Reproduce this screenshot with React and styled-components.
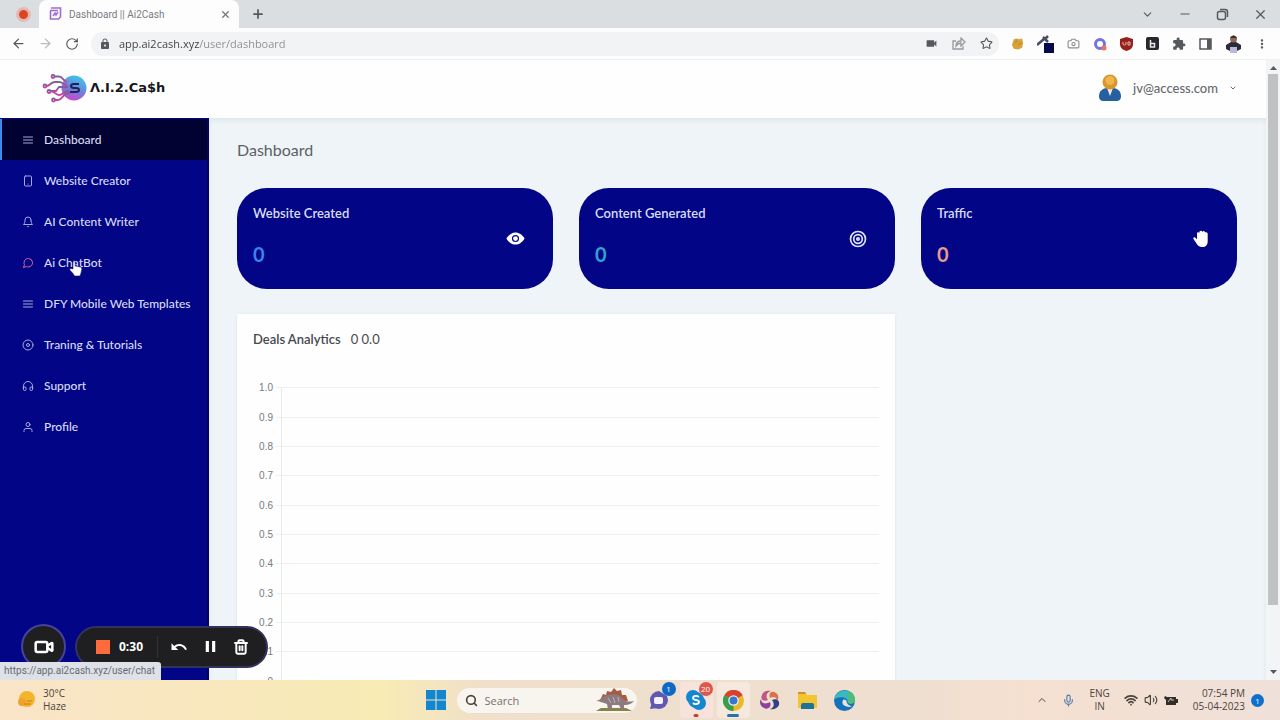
import styled, { createGlobalStyle } from "styled-components";
import {
  FiMenu,
  FiSmartphone,
  FiBell,
  FiMessageCircle,
  FiDisc,
  FiHeadphones,
  FiUser,
} from "react-icons/fi";
import {
  LuArrowLeft,
  LuArrowRight,
  LuRotateCw,
  LuChevronDown,
  LuChevronUp,
  LuMinus,
  LuX,
  LuPlus,
  LuStar,
  LuCamera,
  LuSearch,
  LuVideo,
  LuWifi,
  LuVolume2,
  LuMic,
  LuTrash2,
} from "react-icons/lu";
import {
  MdLock,
  MdVideocam,
  MdExtension,
  MdMoreVert,
  MdPause,
  MdUndo,
} from "react-icons/md";
import { IoEye } from "react-icons/io5";

const GlobalStyle = createGlobalStyle`
  * {
    box-sizing: border-box;
  }
  body {
    margin: 0;
    font-family: Lato, "Noto Sans", sans-serif;
  }
  button {
    display: inline-flex;
    align-items: center;
    justify-content: center;
    padding: 0;
    border: none;
    background: none;
    color: inherit;
    font: inherit;
  }
  svg {
    display: block;
    flex-shrink: 0;
  }
`;

const Screen = styled.div`
  position: relative;
  display: flex;
  flex-direction: column;
  height: 100vh;
  overflow: hidden;
  background-color: #fdfdfe;
`;

/* browser */
const TabStrip = styled.div`
  display: flex;
  align-items: center;
  justify-content: space-between;
  height: 28px;
  flex-shrink: 0;
  padding: 0 12px 0 16px;
  background-color: #dadee1;
  color: #55585c;
`;
const Tabs = styled.div`
  display: flex;
  align-items: center;
  align-self: stretch;
  gap: 12px;
`;
const RecordDot = styled.div`
  width: 15px;
  height: 15px;
  border: 3px solid #e3b9b5;
  border-radius: 50%;
  background-color: #dc4524;
`;
const Tab = styled.div`
  display: flex;
  align-items: center;
  align-self: stretch;
  gap: 7px;
  width: 200px;
  margin-left: -4px;
  padding: 0 8px 0 10px;
  border-radius: 8px 8px 0 0;
  background-color: #fdfdfe;
  font-family: Roboto, sans-serif;
  font-size: 10px;
  color: #797b7e;
`;
const TabTitle = styled.span`
  flex: 1;
`;
const WindowButtons = styled.div`
  display: flex;
  align-items: center;
  gap: 24px;
`;
const Toolbar = styled.div`
  display: flex;
  align-items: center;
  height: 32px;
  flex-shrink: 0;
  gap: 12px;
  padding: 0 11px;
  border-bottom: 1px solid #f0f1f2;
  color: #55585c;
`;
const AddressBar = styled.div`
  display: flex;
  align-items: center;
  flex: 1;
  gap: 8px;
  height: 24px;
  padding: 0 6px 0 8px;
  border-radius: 12px;
  background-color: #f1f3f4;
`;
const AddressInput = styled.input`
  flex: 1;
  min-width: 0;
  padding: 0;
  border: none;
  outline: none;
  font-family: "Open Sans", sans-serif;
  font-size: 11px;
  color: transparent;
  background: linear-gradient(90deg, #3b3e42 80px, #8a8d90 80px);
  background-clip: text;
  -webkit-background-clip: text;
`;
const AddressIcons = styled.div`
  display: flex;
  gap: 14px;
`;
const Extensions = styled.div`
  display: flex;
  align-items: center;
  gap: 13px;
`;
const Faded = styled.button`
  opacity: 0.4;
`;

/* page */
const Page = styled.div`
  display: flex;
  flex: 1;
  min-height: 0;
`;
const Site = styled.div`
  display: flex;
  flex-direction: column;
  flex: 1;
  min-width: 0;
`;
const Header = styled.header`
  display: flex;
  align-items: center;
  justify-content: space-between;
  height: 58px;
  flex-shrink: 0;
  padding: 0 29px 3px 42px;
  background-color: #fefefe;
`;
const Logo = styled.div`
  display: flex;
  align-items: center;
  gap: 3px;
  font-family: "DejaVu Sans", sans-serif;
  font-size: 13px;
  font-weight: 700;
  color: #17171b;
`;
const Account = styled.button`
  gap: 11px;
  font-size: 13px;
  font-weight: 500;
  color: #666a70;
`;
const Body = styled.div`
  display: flex;
  flex: 1;
  min-height: 0;
`;
const Sidebar = styled.nav`
  width: 209px;
  flex-shrink: 0;
  padding-top: 1px;
  background-color: #010586;
  border-right: 2px solid #04045c;
`;
const NavItem = styled.a`
  display: flex;
  align-items: center;
  gap: 10px;
  height: 41px;
  padding-left: ${({ $active }) => ($active ? "20px" : "22px")};
  border-left: ${({ $active }) => ($active ? "2px solid #3b8cf0" : "none")};
  background-color: ${({ $active }) => ($active ? "#020232" : "transparent")};
  font-size: 12px;
  font-weight: 500;
  color: #d9dcf5;
  text-decoration: none;
  white-space: nowrap;

  svg {
    color: ${({ $tint }) => $tint || "#a6a9dc"};
  }
`;
const Main = styled.main`
  flex: 1;
  min-width: 0;
  overflow: hidden;
  padding: 20px 29px 0 28px;
  background-color: #eef4f7;
  box-shadow: inset 0 3px 4px #dfe7ee;
`;
const Title = styled.h1`
  margin: 0 0 26px;
  font-size: 16px;
  line-height: 24px;
  font-weight: 400;
  color: #5a5f66;
`;
const Cards = styled.div`
  display: grid;
  grid-template-columns: repeat(3, 1fr);
  gap: 25px 26px;
`;
const Card = styled.section`
  display: flex;
  align-items: center;
  justify-content: space-between;
  height: 101px;
  padding: 0 28px 0 16px;
  border-radius: 30px;
  background-color: #010586;
  color: white;
`;
const CardText = styled.div`
  padding-bottom: 6px;
`;
const CardLabel = styled.div`
  font-size: 13px;
  line-height: 20px;
  font-weight: 600;
  color: #d9dcf5;
`;
const CardValue = styled.div`
  margin-top: 16px;
  font-size: 20px;
  line-height: 30px;
  font-weight: 700;
  color: ${({ $color }) => $color};
`;
const Analytics = styled.section`
  grid-column: span 2;
  padding: 15px 16px;
  background-color: #fefefe;
  box-shadow: 0 0 3px #dde5ea;
`;
const AnalyticsTitle = styled.h2`
  display: flex;
  gap: 10px;
  margin: 0 0 24px;
  font-size: 13px;
  line-height: 20px;
  font-weight: 600;
  color: #45494f;
`;
const Totals = styled.span`
  font-weight: 400;
`;
const Chart = styled.div`
  display: grid;
  grid-template-rows: repeat(11, 1fr);
  height: 323px;
`;
const ChartRow = styled.div`
  display: flex;
  align-items: center;
  gap: 3px;
  font-family: "Liberation Sans", sans-serif;
  font-size: 10px;
  color: #777a7e;
`;
const Tick = styled.span`
  width: 20px;
  text-align: right;
`;
const GridLine = styled.div`
  flex: 1;
  height: 1px;
  background-color: #eeeff0;
`;
const AxisCell = styled.div`
  display: flex;
  align-self: stretch;
  flex: 1;
  margin-top: ${({ $first }) => ($first ? "14px" : "0")};
  align-items: ${({ $first }) => ($first ? "flex-start" : "center")};
  background: linear-gradient(#e9eaeb, #e9eaeb) 5px 0 / 1px 100% no-repeat;
`;

const Scrollbar = styled.div`
  display: flex;
  flex-direction: column;
  align-items: center;
  justify-content: space-between;
  width: 14px;
  padding: 5px 0;
  background-color: #f3f4f5;
  color: #55585c;
`;
const Thumb = styled.div`
  width: 10px;
  height: 87%;
  margin: 4px 0 auto;
  background-color: #bfc1c3;
`;

/* taskbar */
const Taskbar = styled.footer`
  display: grid;
  grid-template-columns: 1fr auto 1fr;
  align-items: center;
  height: 40px;
  flex-shrink: 0;
  padding: 0 16px;
  background: linear-gradient(90deg, #f9e4c8, #f8ebb4 30%, #efdfcb 38%, #eedfd1 70%, #f5e0d0 80%, #efe0d9);
  font-family: "Open Sans", sans-serif;
  font-size: 10px;
  line-height: 13px;
  color: #4c443c;
`;
const Weather = styled.div`
  display: flex;
  align-items: center;
  gap: 7px;
`;
const Apps = styled.div`
  display: flex;
  align-items: center;
  gap: 4px;
`;
const AppButton = styled.button`
  position: relative;
  width: 33px;
  height: 36px;
  border-radius: 4px;
  background-color: ${({ $open }) => $open || "transparent"};
`;
const Running = styled.span`
  position: absolute;
  bottom: 1px;
  left: 50%;
  width: ${({ $wide }) => ($wide ? "12px" : "5px")};
  height: 3px;
  border-radius: 2px;
  background-color: ${({ $wide }) => ($wide ? "#2476aa" : "#bf453c")};
  transform: translateX(-50%);
`;
const Badge = styled.span`
  position: absolute;
  top: 0;
  right: 0;
  width: 14px;
  height: 14px;
  border-radius: 50%;
  background-color: ${({ $color }) => $color || "#0d69c4"};
  font-size: 8px;
  line-height: 14px;
  text-align: center;
  color: white;
`;
const SearchBox = styled.label`
  display: flex;
  align-items: center;
  gap: 7px;
  width: 180px;
  height: 25px;
  margin-right: 2px;
  padding: 0 2px 0 8px;
  border-radius: 13px;
  background-color: #f8f4ee;
`;
const SearchInput = styled.input`
  flex: 1;
  min-width: 0;
  border: none;
  padding: 0;
  background: none;
  outline: none;
  font-family: "Open Sans", sans-serif;
  font-size: 11px;

  &::placeholder {
    color: #77726d;
  }
`;
const Tray = styled.div`
  display: flex;
  align-items: center;
  justify-content: flex-end;
  gap: 14px;
`;
const TrayGroup = styled.div`
  display: flex;
  align-items: center;
  gap: 6px;
`;
const TrayText = styled.div`
  text-align: ${({ $align }) => $align || "left"};
`;
const Notice = styled.span`
  width: 13px;
  height: 13px;
  border-radius: 50%;
  background-color: #0d70cb;
  font-size: 8px;
  text-align: center;
  color: white;
`;

/* overlays */
const Recorder = styled.div`
  position: absolute;
  left: 21px;
  bottom: 51px;
  display: flex;
  align-items: center;
  gap: 9px;
  color: white;
`;
const CameraButton = styled.button`
  width: 45px;
  height: 45px;
  border: 2px solid #45439a;
  border-radius: 50%;
  background-color: #1f1f21;
`;
const RecorderBar = styled.div`
  display: flex;
  align-items: center;
  width: 193px;
  height: 42px;
  padding: 0 17px 0 19px;
  border: 2px solid #33325c;
  border-radius: 21px;
  background-color: #1f1f21;
  font-family: "Open Sans", sans-serif;
  font-size: 12px;
  font-weight: 700;
`;
const StopButton = styled.button`
  width: 14px;
  height: 14px;
  margin-right: 9px;
  background-color: #ff6b3d;
`;
const RecorderActions = styled.div`
  display: flex;
  align-items: center;
  gap: 13px;
  margin-left: auto;
`;
const Divider = styled.div`
  width: 1px;
  height: 22px;
  margin-left: 14px;
  background-color: #333336;
`;
const LinkStatus = styled.div`
  position: absolute;
  left: 0;
  bottom: 40px;
  height: 18px;
  padding: 0 6px 0 4px;
  border-radius: 0 3px 0 0;
  background-color: #dee2e8;
  font-family: Roboto, sans-serif;
  font-size: 10px;
  line-height: 17px;
  color: #666a70;
`;
const Pointer = styled.div`
  position: absolute;
  left: 69px;
  top: 260px;
`;

const navItems = [
  { label: "Dashboard", icon: FiMenu, active: true },
  { label: "Website Creator", icon: FiSmartphone },
  { label: "AI Content Writer", icon: FiBell },
  { label: "Ai ChatBot", icon: FiMessageCircle, tint: "#d2699c" },
  { label: "DFY Mobile Web Templates", icon: FiMenu },
  { label: "Traning & Tutorials", icon: FiDisc },
  { label: "Support", icon: FiHeadphones },
  { label: "Profile", icon: FiUser },
];

const ticks = ["1.0", "0.9", "0.8", "0.7", "0.6", "0.5", "0.4", "0.3", "0.2", "0.1", "0"];

function Favicon() {
  return (
    <svg width="13" height="14" viewBox="0 0 13 14" fill="none" stroke="#a06bd0" strokeWidth="1.6">
      <path d="M2 1h9.500v9l-2 2H1.500V4" />
      <path d="M1 3.500h8M4 9l2-3 1 2 2-3" />
    </svg>
  );
}

function BrandMark() {
  return (
    <svg width="45" height="30" viewBox="0 0 45 30" fill="none">
      <defs>
        <linearGradient id="orb" x1="0.7" y1="0" x2="0.3" y2="1">
          <stop offset="0" stopColor="#3cc9ea" />
          <stop offset="0.5" stopColor="#6a86dc" />
          <stop offset="1" stopColor="#d33fd0" />
        </linearGradient>
        <linearGradient id="wire" x1="0" y1="0" x2="0" y2="1">
          <stop offset="0" stopColor="#76639f" />
          <stop offset="1" stopColor="#cf3f9d" />
        </linearGradient>
      </defs>
      <circle cx="32" cy="15" r="12.500" fill="url(#orb)" />
      <g stroke="url(#wire)" strokeWidth="1.800">
        <path d="M12 3.500h5c4 0 4 5 8 5.500" />
        <path d="M4 13c5 0 4-4 9-4h4c4 0 4 3 8 3" />
        <path d="M8 18h6l3-4h9" />
        <path d="M8 18c5 0 5 4 9 4s5-4 10-4" />
        <path d="M13 27h3c5 0 4-7 12-7" />
        <circle cx="11" cy="3.500" r="1.500" />
        <circle cx="3" cy="13" r="1.500" />
        <circle cx="7" cy="18.500" r="1.500" />
        <circle cx="11.500" cy="27" r="1.500" />
      </g>
      <path d="M37 11h-5c-4 0-4 4 0 4h2c4 0 4 4 0 4h-6" stroke="#1b2358" strokeWidth="2" />
    </svg>
  );
}

function Avatar() {
  return (
    <svg width="24" height="28" viewBox="0 0 24 28">
      <path d="M1 22c0-5 4-8 8-8h6c4 0 8 3 8 8 0 4-2 5-5 5H6c-3 0-5-1-5-5z" fill="#28609f" />
      <path d="M9 14h6l-3 8z" fill="#e6eef5" />
      <circle cx="12" cy="8" r="7.500" fill="#d9962a" />
      <circle cx="12" cy="6.500" r="4.500" fill="#efb550" />
    </svg>
  );
}

function TargetGlyph() {
  return (
    <svg width="18" height="18" viewBox="0 0 18 18" fill="none" stroke="#dfe1f7" strokeWidth="1.700">
      <circle cx="9" cy="9" r="7.500" />
      <circle cx="9" cy="9" r="4.300" />
      <circle cx="9" cy="9" r="1.200" />
    </svg>
  );
}

function HandGlyph() {
  return (
    <svg width="16" height="17" viewBox="0 0 16 17" fill="white">
      <path d="M4 8V3.500C4 2 6 2 6.200 3.200 6 .5 9 .2 9.300 2c.5-1.500 2.700-1.200 2.700.6 1-.8 2.700-.2 2.700 1.400V11c0 4-2 6-5.500 6-3 0-4.500-1.200-6-4L.5 9C-.2 7.600 1.700 6.700 2.700 8L4 9.500z" />
    </svg>
  );
}

function CursorGlyph() {
  return (
    <svg width="14" height="17" viewBox="0 0 14 17" fill="white" stroke="#1b1f55" strokeWidth="0.600">
      <path d="M4 9V2c0-1.600 2.200-1.600 2.200 0v4l5 1c1.300.3 1.800 1 1.600 2.300L12 13l-1 3H5.500L4 13.500 1 10.300C.2 9 1.600 8 2.600 8.700z" />
    </svg>
  );
}

function ShareGlyph() {
  return (
    <svg width="14" height="13" viewBox="0 0 14 13" fill="none" stroke="#96999c" strokeWidth="1.300">
      <path d="M4 4H1v8h10V9" />
      <path d="M4 9c0-4 2-5 5-5V1l4 4-4 4V6C7 6 5.500 7 4 9z" />
    </svg>
  );
}

function DinoGlyph() {
  return (
    <svg width="40" height="24" viewBox="0 0 40 24">
      <path d="M1 23l5-3h25l6 3z" fill="#83854b" />
      <path d="M5 12l3-6 3 1 1-4 4 1 3-4 3 3 4-1 1 5 4 0 2 6z" fill="#a65c42" />
      <path d="M1 13c5-1 7-5 12-6 7-2 12 0 15 4 3 3 6 3 11 2-3 4-8 4-10 4v4h-3l-2-4h-7v4h-4l-1-5c-4-1-7-3-11-3z" fill="#8c7a80" />
      <path d="M13 10l3 5M18 9l2 6M23 9l1 5" stroke="#c0b3b3" />
    </svg>
  );
}

function ChromeGlyph() {
  return (
    <svg width="21" height="21" viewBox="0 0 20 20">
      <circle cx="10" cy="10" r="10" fill="#e9b92c" />
      <path d="M10 10L1.300 5A10 10 0 0118.700 5z" fill="#d5432f" />
      <path d="M10 10L1.300 5A10 10 0 0010 20z" fill="#3c9c4d" />
      <circle cx="10" cy="10" r="5" fill="#f4f3ee" />
      <circle cx="10" cy="10" r="3.800" fill="#3777cd" />
    </svg>
  );
}

function SwirlGlyph() {
  return (
    <svg width="20" height="20" viewBox="0 0 20 20">
      <path d="M10 8C8 3 12 0 16 3c3 2 3 6 1 8 0-4-4-5-7-3z" fill="#d8734f" />
      <path d="M12 10c5-2 8 1 7 5-2 4-6 5-9 4 4-1 5-5 2-9z" fill="#333f88" />
      <path d="M10 12c2 5-2 8-6 6-4-2-5-6-3-9 0 4 4 6 9 3z" fill="#8f3f9c" />
      <path d="M8 10C3 12 0 9 2 5c1-4 5-5 9-4-4 1-6 5-3 9z" fill="#c25586" />
    </svg>
  );
}

function BatteryGlyph() {
  return (
    <svg width="15" height="11" viewBox="0 0 15 11" fill="#332e2a">
      <path d="M3 2h9v2h2v4h-2v2H2V5L0 3l1-2z" />
      <path d="M4 7l3-4v2h3" fill="none" stroke="#c9bcb2" />
    </svg>
  );
}

export default function App() {
  return (
    <Screen>
      <GlobalStyle />

      <TabStrip>
        <Tabs>
          <RecordDot />
          <Tab>
            <Favicon />
            <TabTitle>Dashboard || Ai2Cash</TabTitle>
            <button aria-label="Close tab">
              <LuX size={11} strokeWidth={3} />
            </button>
          </Tab>
          <button aria-label="New tab">
            <LuPlus size={14} strokeWidth={3} />
          </button>
        </Tabs>
        <WindowButtons>
          <button aria-label="Search tabs"><LuChevronDown size={13} /></button>
          <button aria-label="Minimize"><LuMinus size={14} /></button>
          <button aria-label="Restore">
            <svg width="13" height="13" viewBox="0 0 13 13" fill="none" stroke="currentColor" strokeWidth="1.500">
              <rect x="1.500" y="3.500" width="8" height="8" rx="2" />
              <path d="M4 1.500h5q2.500 0 2.500 2.500v5" />
            </svg>
          </button>
          <button aria-label="Close"><LuX size={15} /></button>
        </WindowButtons>
      </TabStrip>

      <Toolbar>
        <button aria-label="Back"><LuArrowLeft size={15} /></button>
        <Faded aria-label="Forward"><LuArrowRight size={15} /></Faded>
        <button aria-label="Reload"><LuRotateCw size={14} /></button>
        <AddressBar>
          <MdLock size={12} />
          <AddressInput aria-label="Address" defaultValue="app.ai2cash.xyz/user/dashboard" />
          <AddressIcons>
            <MdVideocam size={13} />
            <ShareGlyph />
            <LuStar size={13} />
          </AddressIcons>
        </AddressBar>
        <Extensions>
          <svg width="13" height="14" viewBox="0 0 14 14">
            <path d="M3 2l3-1 3 1 3-1 1 5-1 5-4 2-5-1-2-4z" fill="#d9a13a" />
            <path d="M4 5l3-1M8 8l3-2" stroke="#b57a28" />
          </svg>
          <svg width="17" height="19" viewBox="0 0 17 19">
            <path d="M0 11l7-6M6 3l5 5M8 5l3-3" stroke="#4a4d68" strokeWidth="2.500" />
            <rect x="7" y="9" width="10" height="10" fill="#08084d" />
          </svg>
          <LuCamera size={13} color="#8a8d90" />
          <svg width="14" height="14" viewBox="0 0 14 14">
            <circle cx="7" cy="7" r="4.500" fill="none" stroke="#7773dc" strokeWidth="3" />
            <circle cx="11" cy="11" r="2.500" fill="#ee7458" />
          </svg>
          <svg width="13" height="14" viewBox="0 0 13 14">
            <path d="M6.500 0L13 2v5c0 4-3 6-6.500 7C3 13 0 11 0 7V2z" fill="#96201c" />
            <path d="M3 5v2q0 1 1.500 1T6 7V5M8 5h2v3H8z" fill="none" stroke="#e6b5b0" />
          </svg>
          <svg width="13" height="13" viewBox="0 0 13 13">
            <rect width="13" height="13" rx="2" fill="#26282b" />
            <path d="M4.500 3v7h4V6.500h-4" fill="none" stroke="#e8e8e8" strokeWidth="1.500" />
          </svg>
          <MdExtension size={14} />
          <svg width="13" height="12" viewBox="0 0 13 12">
            <rect x="1" y="1" width="11" height="10" fill="none" stroke="#55585c" strokeWidth="1.500" />
            <rect x="8" y="1" width="4" height="10" fill="#55585c" />
          </svg>
          <svg width="17" height="18" viewBox="0 0 17 18">
            <path d="M1 10l5-3h5l5 3v4l-4 2H5l-4-2z" fill="#2b2c3b" />
            <path d="M5 12h7v6H5z" fill="#b9b9dd" />
            <circle cx="8.500" cy="4" r="3.500" fill="#8e6a55" />
            <path d="M5 3q3.500-5 7 0z" fill="#37302c" />
          </svg>
          <button aria-label="Menu"><MdMoreVert size={14} /></button>
        </Extensions>
      </Toolbar>

      <Page>
        <Site>
          <Header>
            <Logo>
              <BrandMark />
              Λ.I.2.Ca$h
            </Logo>
            <Account>
              <Avatar />
              jv@access.com
              <LuChevronDown size={8} strokeWidth={3} />
            </Account>
          </Header>
          <Body>
            <Sidebar>
              {navItems.map(({ label, icon: Icon, active, tint }) => (
                <NavItem key={label} href="#" $active={active} $tint={tint}>
                  <Icon size={12} />
                  {label}
                </NavItem>
              ))}
            </Sidebar>
            <Main>
              <Title>Dashboard</Title>
              <Cards>
                <Card>
                  <CardText>
                    <CardLabel>Website Created</CardLabel>
                    <CardValue $color="#3a82f0">0</CardValue>
                  </CardText>
                  <IoEye size={19} />
                </Card>
                <Card>
                  <CardText>
                    <CardLabel>Content Generated</CardLabel>
                    <CardValue $color="#2fa3cf">0</CardValue>
                  </CardText>
                  <TargetGlyph />
                </Card>
                <Card>
                  <CardText>
                    <CardLabel>Traffic</CardLabel>
                    <CardValue $color="#e89a8c">0</CardValue>
                  </CardText>
                  <HandGlyph />
                </Card>
                <Analytics>
                  <AnalyticsTitle>
                    Deals Analytics <Totals>0 0.0</Totals>
                  </AnalyticsTitle>
                  <Chart>
                    {ticks.map((tick, i) => (
                      <ChartRow key={tick}>
                        <Tick>{tick}</Tick>
                        <AxisCell $first={i === 0}>
                          <GridLine />
                        </AxisCell>
                      </ChartRow>
                    ))}
                  </Chart>
                </Analytics>
              </Cards>
            </Main>
          </Body>
        </Site>
        <Scrollbar>
          <svg width="7" height="5" viewBox="0 0 7 5"><path d="M0 5l3.500-4L7 5z" fill="currentColor" /></svg>
          <Thumb />
          <svg width="7" height="5" viewBox="0 0 7 5"><path d="M0 0l3.500 4L7 0z" fill="currentColor" /></svg>
        </Scrollbar>
      </Page>

      <Taskbar>
        <Weather>
          <svg width="20" height="20" viewBox="0 0 20 20">
            <circle cx="11" cy="9" r="8" fill="#f3b52c" />
            <circle cx="6" cy="12" r="4" fill="#eda32a" />
            <path d="M8 14h7M11 11h5" stroke="#d98d22" strokeWidth="1.500" />
          </svg>
          <div>
            30°C
            <br />
            Haze
          </div>
        </Weather>
        <Apps>
          <AppButton aria-label="Start">
            <svg width="20" height="20" viewBox="0 0 20 20" fill="#1286cf">
              <path d="M0 0h9.500v9.500H0zM10.500 0H20v9.500h-9.500zM0 10.500h9.500V20H0zM10.500 10.500H20V20h-9.500z" />
            </svg>
          </AppButton>
          <SearchBox>
            <LuSearch size={13} strokeWidth={3} />
            <SearchInput aria-label="Search" placeholder="Search" />
            <DinoGlyph />
          </SearchBox>
          <AppButton aria-label="Chat">
            <svg width="21" height="20" viewBox="0 0 21 20">
              <path d="M10 1a9 9 0 109 9L18 6z" fill="#6158b4" />
              <path d="M1 19l2-7 6 6z" fill="#6158b4" />
              <rect x="5" y="7" width="9" height="7" rx="2" fill="#f5f3fa" />
            </svg>
            <Badge>1</Badge>
          </AppButton>
          <AppButton aria-label="Skype" $open="#f8e3dc">
            <svg width="20" height="20" viewBox="0 0 20 20">
              <circle cx="7" cy="7" r="7" fill="#1388cf" />
              <circle cx="13" cy="13" r="7" fill="#1388cf" />
              <circle cx="10" cy="10" r="8" fill="#1388cf" />
              <path d="M13 7c-3-2-6-1-6 1 0 3 6 1 6 4 0 2-4 3-6 1" fill="none" stroke="white" strokeWidth="1.800" />
            </svg>
            <Badge $color="#df564c">20</Badge>
            <Running />
          </AppButton>
          <AppButton aria-label="Chrome" $open="#f4e8df">
            <ChromeGlyph />
            <Running $wide />
          </AppButton>
          <AppButton aria-label="Swirl">
            <SwirlGlyph />
          </AppButton>
          <AppButton aria-label="File Explorer">
            <svg width="21" height="19" viewBox="0 0 21 19">
              <path d="M1 1h7l2 3h10v13H1z" fill="#f3c52e" />
              <path d="M1 1h7l1 2H1z" fill="#c9922b" />
              <path d="M4 14q0-2 2-2h9q2 0 2 2v4H4z" fill="#20729d" />
            </svg>
          </AppButton>
          <AppButton aria-label="Edge">
            <svg width="21" height="21" viewBox="0 0 20 20">
              <circle cx="10" cy="10" r="10" fill="#1472bd" />
              <path d="M0 9C2-2 19-3 20 9c0 4-5 5-7 3 1-5-7-7-13-3z" fill="#3cb9c0" />
              <path d="M13 1c5 1 7 5 7 8 0 4-5 5-7 3 2-4 2-8 0-11z" fill="#50bd73" />
              <path d="M9 9c-3 4 1 8 8 7-1-1-5-2-5-5q0-2-3-2z" fill="#e9e2d9" />
            </svg>
          </AppButton>
        </Apps>
        <Tray>
          <LuChevronUp size={12} />
          <LuMic size={13} color="#4878a9" />
          <TrayText $align="center">
            ENG
            <br />
            IN
          </TrayText>
          <TrayGroup>
            <LuWifi size={14} strokeWidth={3} />
            <LuVolume2 size={14} />
            <BatteryGlyph />
          </TrayGroup>
          <TrayGroup>
            <TrayText $align="right">
              07:54 PM
              <br />
              05-04-2023
            </TrayText>
            <Notice>1</Notice>
          </TrayGroup>
        </Tray>
      </Taskbar>

      <Recorder>
        <CameraButton aria-label="Camera"><LuVideo size={20} strokeWidth={3} /></CameraButton>
        <RecorderBar>
          <StopButton aria-label="Stop" />
          0:30
          <Divider />
          <RecorderActions>
            <button aria-label="Restart"><MdUndo size={18} /></button>
            <button aria-label="Pause"><MdPause size={19} /></button>
            <button aria-label="Delete"><LuTrash2 size={16} strokeWidth={3} /></button>
          </RecorderActions>
        </RecorderBar>
      </Recorder>
      <LinkStatus>https://app.ai2cash.xyz/user/chat</LinkStatus>
      <Pointer>
        <CursorGlyph />
      </Pointer>
    </Screen>
  );
}
